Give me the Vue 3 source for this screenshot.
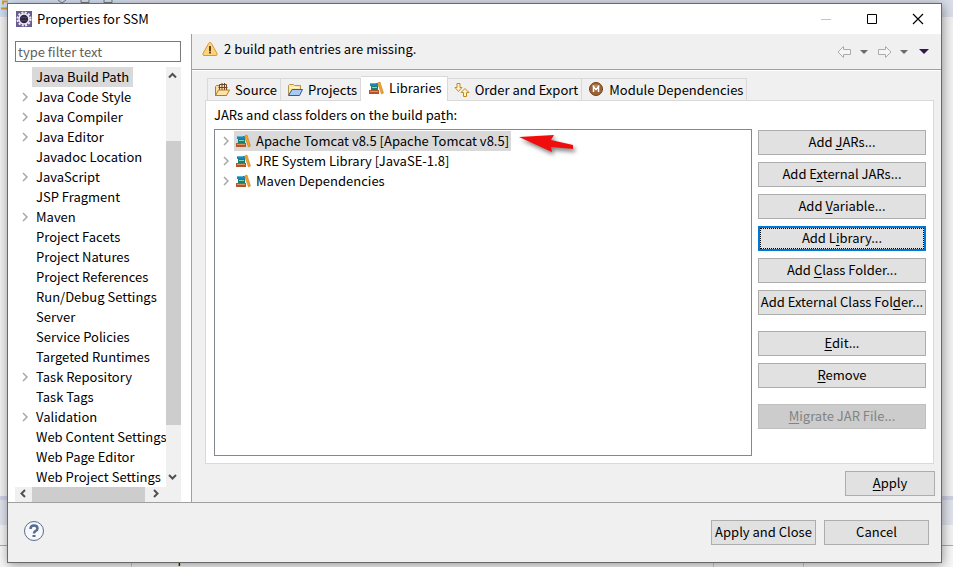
<script setup>
const tree = [
  { t: 'Java Build Path', sel: true }, { t: 'Java Code Style', x: true }, { t: 'Java Compiler', x: true },
  { t: 'Java Editor', x: true }, { t: 'Javadoc Location' }, { t: 'JavaScript', x: true }, { t: 'JSP Fragment' },
  { t: 'Maven', x: true }, { t: 'Project Facets' }, { t: 'Project Natures' }, { t: 'Project References' },
  { t: 'Run/Debug Settings' }, { t: 'Server' }, { t: 'Service Policies' }, { t: 'Targeted Runtimes' },
  { t: 'Task Repository', x: true }, { t: 'Task Tags' }, { t: 'Validation', x: true },
  { t: 'Web Content Settings' }, { t: 'Web Page Editor' }, { t: 'Web Project Settings' },
]
const tabs = [
  { t: 'Source', i: 'source' }, { t: 'Projects', i: 'projects' }, { t: 'Libraries', i: 'books', on: true },
  { t: 'Order and Export', i: 'order' }, { t: 'Module Dependencies', i: 'module' },
]
const libs = [
  { t: 'Apache Tomcat v8.5 [Apache Tomcat v8.5]', sel: true },
  { t: 'JRE System Library [JavaSE-1.8]' },
  { t: 'Maven Dependencies' },
]
const groups = [
  [['Add ', 'J', 'ARs...'], ['Add E', 'x', 'ternal JARs...'], ['Add ', 'V', 'ariable...'], ['Add L', 'i', 'brary...'],
    ['Add ', 'C', 'lass Folder...'], ['Add External Class Fol', 'd', 'er...']],
  [['', 'E', 'dit...'], ['', 'R', 'emove']],
  [['', 'M', 'igrate JAR File...']],
]
</script>

<template>
  <div class="desktop">
    <svg class="defs" width="0" height="0" aria-hidden="true">
      <symbol id="books" viewBox="0 0 16 16">
        <rect x="2" y="3" width="8" height="3" fill="#1a86b8" /><rect x="2" y="3" width="6" height="1" fill="#55b4d8" />
        <rect x="3" y="6" width="7" height="4" fill="#17806c" /><rect x="4" y="7" width="5" height="1" fill="#8fd0b8" />
        <rect x="1" y="10" width="10" height="4" fill="#b5542b" /><rect x="2" y="11" width="8" height="1" fill="#dd9460" />
        <path d="M9.500 3l2.500-1 3.500 11-2 1z" fill="#f3a32b" stroke="#ba741a" stroke-width=".5" />
      </symbol>
      <symbol id="source" viewBox="0 0 16 16">
        <path d="M1.500 13.500v-9l1-1h3l1 1h6v9z" fill="#f9dfa0" stroke="#b87824" />
        <path d="M5.500 2.500h7v6h-7z" fill="#fae6c2" stroke="#704525" /><path d="M8 1v8M10.500 1v8M4.500 5.500h9" stroke="#704525" />
        <path d="M1.500 13.500l3-5.500h11l-3 5.500z" fill="#fbe3a9" stroke="#b87824" />
      </symbol>
      <symbol id="projects" viewBox="0 0 16 16">
        <path d="M1.500 13v-9.500l1-1h4l1 1h6v4" fill="#fbe7a8" stroke="#b89546" />
        <path d="M1.500 13.500l3.500-6h10.500l-3 6z" fill="#a9c9f5" stroke="#2c5ab4" /><path d="M3 5.500h9" stroke="#fff7d8" />
      </symbol>
      <symbol id="order" viewBox="0 0 16 16">
        <path d="M3 1.500h3v4h2l-3.500 4-3.500-4h2z" fill="#fff3c4" stroke="#c28a1c" />
        <path d="M9.500 14.500h3v-4h2.500l-4-4-4 4h2.500z" fill="#fff3c4" stroke="#c28a1c" />
      </symbol>
      <symbol id="module" viewBox="0 0 16 16">
        <circle cx="8" cy="7" r="6.500" fill="#9b6234" stroke="#744319" /><path d="M3.500 5a5 5 0 0 1 9 0" fill="#bd8958" />
        <path d="M5.500 10V4.500L8 7.500l2.500-3V10" fill="none" stroke="#fff" stroke-width="1.500" />
      </symbol>
    </svg>

    <div class="behind" aria-hidden="true">
      <div class="toolbar">
        <svg width="130" height="17" viewBox="0 0 130 17"><path d="M0 0h8v15H0z" fill="#c9ddf3" /><path d="M8 0h122v4H8z" fill="#d4dfef" /><path d="M8 1.500H3v3M8 8.500H1" fill="none" stroke="#d29a32" stroke-width="2" /><path d="M58 0l4 3 4-3M81 0v2.500h8V0M104 0v2.500h8V0" fill="none" stroke="#777" /></svg>
      </div>
      <div class="workspace"></div>
      <div class="band"></div>
      <div class="columns"><span>Description</span><span>Resource</span><span>Path</span></div>
    </div>

    <main class="dialog">
      <header class="titlebar">
        <svg width="16" height="16" viewBox="0 0 16 16"><path d="M0 0h16v16H0z" fill="#6a5a92" /><circle cx="8" cy="8" r="6.500" fill="none" stroke="#f0eef4" stroke-width="2" stroke-dasharray="2 1.400" /><circle cx="8" cy="8" r="5" fill="#302646" stroke="#f2f0f6" stroke-width="1.500" /><path d="M4 6.500h8M4 9.500h8" stroke="#4a3f64" /></svg>
        <h1>Properties for SSM</h1>
        <div class="winctl">
          <button aria-label="Minimize" disabled><svg width="12" height="12" viewBox="0 0 12 12"><path d="M1 6.500h10" stroke="#c4c4c4" /></svg></button>
          <button aria-label="Maximize"><svg width="12" height="12" viewBox="0 0 12 12"><path d="M1.500 1.500h9v9h-9z" fill="none" stroke="#000" /></svg></button>
          <button aria-label="Close"><svg width="12" height="12" viewBox="0 0 12 12"><path d="M1 1l10 10M11 1L1 11" stroke="#000" stroke-width="1.200" /></svg></button>
        </div>
      </header>

      <div class="body">
        <nav class="side">
          <input class="filter" type="text" placeholder="type filter text" aria-label="Filter" />
          <div class="treebox">
            <ul class="tree">
              <li v-for="n in tree" :key="n.t">
                <span class="twist"><svg v-if="n.x" width="6" height="10" viewBox="0 0 6 10"><path d="M1 1l4 4-4 4" fill="none" stroke="#a6a6a6" stroke-width="1.500" /></svg></span>
                <a href="#" :class="{ sel: n.sel }">{{ n.t }}</a>
              </li>
            </ul>
            <div class="vbar">
              <svg width="15" height="15" viewBox="0 0 15 15"><path d="M3 10.500L6.500 7l3.500 3.500" fill="none" stroke="#505050" stroke-width="2" /></svg>
              <div class="vthumb"></div>
              <svg width="15" height="15" viewBox="0 0 15 15"><path d="M3 3l3.500 3.500L10 3" fill="none" stroke="#505050" stroke-width="2" /></svg>
            </div>
            <div class="hbar">
              <svg width="17" height="15" viewBox="0 0 17 15"><path d="M10 3L6.500 6.500 10 10" fill="none" stroke="#505050" stroke-width="2" /></svg>
              <div class="hthumb"></div>
              <svg width="21" height="15" viewBox="0 0 21 15"><path d="M9 3l3.500 3.500L9 10" fill="none" stroke="#505050" stroke-width="2" /></svg>
            </div>
          </div>
        </nav>

        <section class="page">
          <div class="message">
            <svg width="16" height="16" viewBox="0 0 16 16"><path d="M8 1.500Q9 1.500 9.500 2.500L15 12.500Q15.500 14.500 14 14.500H2Q.5 14.500 1 12.500L6.500 2.500Q7 1.500 8 1.500z" fill="#fbd47c" stroke="#d49a3a" /><path d="M8 5v5" stroke="#6b4512" stroke-width="2" /><path d="M7 11.500h2" stroke="#6b4512" stroke-width="2" /></svg>
            <p>2 build path entries are missing.</p>
            <div class="history">
              <button aria-label="Back"><svg width="16" height="14" viewBox="0 0 16 14"><path d="M2 7l5.500-5.500v3h7v5h-7v3z" fill="#f6f6f6" stroke="#ababab" /></svg></button>
              <button aria-label="Back history"><svg width="8" height="4" viewBox="0 0 8 4"><path d="M0 0h8L4 4z" fill="#6b6b6b" /></svg></button>
              <button aria-label="Forward"><svg width="16" height="14" viewBox="0 0 16 14"><path d="M15 7L9.500 1.500v3h-7v5h7v3z" fill="#f6f6f6" stroke="#ababab" /></svg></button>
              <button aria-label="Forward history"><svg width="8" height="4" viewBox="0 0 8 4"><path d="M0 0h8L4 4z" fill="#6b6b6b" /></svg></button>
              <button aria-label="Menu"><svg width="10" height="5" viewBox="0 0 10 5"><path d="M0 0h10L5 5z" fill="#32184e" /></svg></button>
            </div>
          </div>

          <div class="content">
            <div class="tabs" role="tablist">
              <button v-for="t in tabs" :key="t.t" role="tab" :aria-selected="!!t.on" :class="['tab', { on: t.on }]">
                <svg width="16" height="16"><use :href="'#' + t.i" /></svg><span>{{ t.t }}</span>
              </button>
            </div>
            <div class="panel">
              <p class="caption">JARs and class folders on the build pa<u>t</u>h:</p>
              <div class="cols">
                <div class="list">
                  <ul>
                    <li v-for="l in libs" :key="l.t">
                      <svg class="arrow" width="6" height="10" viewBox="0 0 6 10"><path d="M1 1l4 4-4 4" fill="none" stroke="#a6a6a6" stroke-width="1.500" /></svg>
                      <a href="#" :class="{ sel: l.sel }"><svg width="16" height="16"><use href="#books" /></svg>{{ l.t }}</a>
                    </li>
                  </ul>
                  <svg class="pointer" width="64" height="28" viewBox="0 0 64 28"><path d="M3 7l35-2-3 5 22 5v4l-22-2 1 5z" fill="#f00d0d" /></svg>
                </div>
                <div class="actions">
                  <div v-for="(g, gi) in groups" :key="gi" class="group">
                    <button v-for="b in g" :key="b[1]" :class="['btn', { focus: b[1] === 'i' }]" :disabled="b[1] === 'M'">{{ b[0] }}<u>{{ b[1] }}</u>{{ b[2] }}</button>
                  </div>
                </div>
              </div>
            </div>
            <div class="applyrow"><button class="btn apply"><u>A</u>pply</button></div>
          </div>
        </section>
      </div>

      <footer class="footer">
        <button class="help" aria-label="Help"><svg width="22" height="22" viewBox="0 0 22 22"><circle cx="11" cy="11" r="9.500" fill="#f6f8fb" stroke="#5a6c8c" /><path d="M7.500 9Q7.500 5.500 11 5.500t3.500 3q0 1.500-2 2.500-1.500 1-1.500 2.500" fill="none" stroke="#566a92" stroke-width="2.500" /><path d="M9.500 15h3v2h-3z" fill="#566a92" /></svg></button>
        <button class="btn">Apply and Close</button>
        <button class="btn">Cancel</button>
      </footer>
    </main>
  </div>
</template>

<style>
body { margin: 0; background: #f0f0f0; }
</style>

<style scoped>
* { box-sizing: border-box; }
.desktop { position: relative; display: flex; min-height: 100vh; padding: 3px 11px 5px 7px; overflow: hidden; font: 13px/20px "Noto Sans CJK SC", "Noto Sans", sans-serif; color: #000; }
.defs { position: absolute; }
.behind { position: absolute; inset: 0; display: flex; flex-direction: column; background: #f0f0f0; }
.toolbar { height: 17px; background: #d9dde8; }
.toolbar svg { display: block; }
.workspace { flex: 1; }
.band { height: 50px; border-top: 4px solid #cbd0e4; background: linear-gradient(#dfe1eb 25px, #f2f2f2 25px); border-bottom: 1px solid #aaa; }
.columns { display: grid; grid-template-columns: 582px 90px 1fr; height: 22px; padding-left: 131px; background: #f6f6f6; line-height: 24px; }
.columns span { padding-left: 8px; border-left: 1px solid #ccc; }
ul { list-style: none; margin: 0; padding: 0; }
p, h1 { margin: 0; font-size: 13px; font-weight: 400; }
a { color: inherit; text-decoration: none; white-space: nowrap; }
button, input { font: inherit; color: inherit; }
button { padding: 0; border: 0; background: none; white-space: nowrap; }
u { text-underline-offset: 2px; }
.dialog { position: relative; flex: 1; min-width: 0; display: flex; flex-direction: column; border: 1px solid #696969; background: #f0f0f0; box-shadow: 1px 2px 10px rgba(0, 0, 0, .4); }
.titlebar { display: flex; align-items: center; gap: 5px; height: 30px; padding: 0 17px 0 8px; background: #fff; }
.winctl { display: flex; gap: 34px; margin-left: auto; }
.winctl button, .winctl svg { display: block; }
.body { flex: 1; display: flex; min-height: 0; border-bottom: 1px solid #a0a0a0; background: #fff; }
.side { display: flex; flex-direction: column; gap: 5px; width: 184px; padding: 7px 10px 0 7px; border-right: 1px solid #a0a0a0; }
.filter { width: 100%; height: 21px; padding: 0 2px; border: 1px solid #7a7a7a; background: #fff; }
.filter::placeholder { color: #606060; opacity: 1; }
.treebox { flex: 1; display: grid; grid-template-columns: minmax(0, 1fr) 15px; grid-template-rows: 1fr 15px; min-height: 0; }
.tree { overflow: hidden; }
.tree li { display: flex; height: 20px; }
.twist { display: flex; align-items: center; width: 17px; padding-left: 7px; flex: none; }
.tree a { padding: 0 4px; }
.sel { background: #d9d9d9; }
.vbar { display: flex; flex-direction: column; background: #f0f0f0; }
.vthumb { flex: 1; margin: 59px 0 47px; background: #cdcdcd; }
.hbar { grid-column: 1 / 3; display: flex; padding-right: 15px; background: #f0f0f0; }
.hthumb { flex: 1; background: #cdcdcd; }
.page { flex: 1; min-width: 0; display: flex; flex-direction: column; background: #f0f0f0; }
.message { display: flex; align-items: center; gap: 6px; height: 36px; padding: 0 7px 5px 10px; border-bottom: 1px solid #a0a0a0; box-shadow: 0 1px #fff; }
.history { display: flex; align-items: center; margin-left: auto; padding-top: 5px; }
.history button { display: flex; justify-content: center; width: 20px; }
.content { flex: 1; display: flex; flex-direction: column; padding: 6px 6px 6px 13px; }
.tabs { display: flex; align-items: flex-end; padding: 0 2px; }
.tab { display: flex; align-items: center; gap: 5px; height: 22px; padding: 0 3px 0 6px; border: 1px solid #d9d9d9; border-bottom: 0; border-left-width: 0; }
.tab:first-child { border-left-width: 1px; }
.tab.on { position: relative; height: 25px; margin-bottom: -1px; padding: 0 5px 2px 7px; background: #fff; }
.panel { flex: 1; display: flex; flex-direction: column; gap: 4px; margin-right: 1px; padding: 4px 7px 7px 8px; border: 1px solid #d9d9d9; background: #fff; }
.cols { flex: 1; display: flex; gap: 6px; }
.list { position: relative; flex: 1; padding: 1px 0 0 8px; border: 1px solid #828790; }
.list li { display: flex; align-items: center; gap: 5px; height: 20px; }
.list a { display: flex; align-items: center; gap: 5px; padding: 0 2px 0 1px; }
.pointer { position: absolute; left: 301px; top: 0; filter: drop-shadow(2px 3px 2px rgba(0, 0, 0, .5)); }
.actions { display: flex; flex-direction: column; gap: 16px; width: 168px; padding-top: 1px; }
.group { display: flex; flex-direction: column; gap: 7px; }
.btn { height: 25px; padding-bottom: 2px; border: 1px solid #adadad; background: #e1e1e1; text-align: center; }
.btn.focus { border: 2px solid #0078d7; outline: 1px dotted #000; outline-offset: -3px; }
.btn:disabled { border-color: #bfbfbf; background: #ccc; color: #838383; }
.applyrow { display: flex; justify-content: flex-end; padding-top: 7px; }
.apply { width: 90px; }
.footer { display: flex; align-items: center; gap: 8px; height: 59px; padding: 0 12px 0 15px; }
.footer .btn { width: 105px; }
.help { margin-right: auto; padding-bottom: 4px; }
.help svg { display: block; }
</style>
